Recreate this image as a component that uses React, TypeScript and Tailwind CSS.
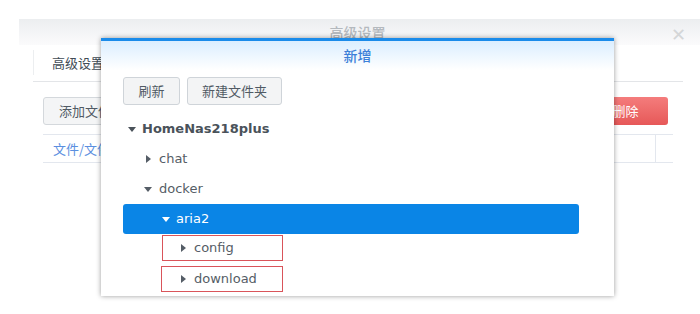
import React from 'react'

const cn = '"Noto Sans CJK SC", "DejaVu Sans", sans-serif'

const Down = ({ className = '' }: { className?: string }) => (
  <svg width="8" height="5" viewBox="0 0 8 5" className={className}>
    <polygon points="0,0 8,0 4,5" fill="currentColor" />
  </svg>
)

const Right = ({ className = '' }: { className?: string }) => (
  <svg width="5" height="8" viewBox="0 0 5 8" className={className}>
    <polygon points="0,0 5,4 0,8" fill="currentColor" />
  </svg>
)

export default function App() {
  return (
    <div
      className="relative w-[700px] h-[314px] overflow-hidden bg-white text-[13px] text-[#505a64]"
      style={{ fontFamily: cn }}
    >
      {/* background window */}
      <div className="ml-[19px] mt-[19px] h-[277px]">
        <div className="relative flex h-[26px] items-center justify-center bg-gradient-to-b from-[#eceef0] to-[#fbfbfc]">
          <span className="ml-[-4px] text-[14px] font-medium text-[#b4b9be]">高级设置</span>
          <span className="absolute right-[14px] top-[5px] text-[18px] leading-none text-[#d4d6d8]">✕</span>
        </div>
        <div className="ml-[14px] mr-[17px] flex h-[37px] items-end border-b border-[#e3e5e8]">
          <div className="mb-[6px] flex h-[25px] items-center border-l border-[#eceef0] pl-[18px] text-[13px] text-[#414b55]">
            高级设置
          </div>
        </div>
        <div className="ml-[24px] mr-[32px] mt-[15px] flex items-center justify-between">
          <div className="flex h-[28px] items-center rounded-[3px] border border-[#d4d8dc] bg-[#f4f5f6] px-[15px] text-[#505a64]">
            添加文件夹
          </div>
          <div className="flex h-[28px] w-[85px] items-center justify-center rounded-[3px] bg-gradient-to-b from-[#f47c7c] to-[#e65858] text-white">
            删除
          </div>
        </div>
        <div className="ml-[24px] mr-[27px] mt-[9px] flex h-[29px] border-y border-[#e3e7ee]">
          <div className="flex flex-1 items-center pl-[10px] text-[#5b8fe0]">文件/文件夹</div>
          <div className="w-[18px] border-l border-[#e3e7ee]" />
        </div>
      </div>

      {/* dialog */}
      <div className="absolute left-[101px] top-[38px] h-[258px] w-[513px] border-t-[3px] border-[#1a8bea] bg-white shadow-[0_0_5px_rgba(0,0,0,0.4)]">
        <div className="flex h-[29px] items-center justify-center bg-gradient-to-b from-[#dbeeff] to-white text-[14px] font-medium text-[#3b7fd8]">
          新增
        </div>
        <div className="ml-[22px] mt-[7px] flex gap-[7px]">
          <div className="flex h-[28px] w-[57px] items-center justify-center rounded-[3px] border border-[#cfd4d9] bg-[#f3f4f5]">
            刷新
          </div>
          <div className="flex h-[28px] w-[95px] items-center justify-center rounded-[3px] border border-[#cfd4d9] bg-[#f3f4f5]">
            新建文件夹
          </div>
        </div>
        <div className="ml-[22px] mt-[9px] w-[456px] text-[13px] text-[#555d66]" style={{ fontFamily: '"DejaVu Sans", sans-serif' }}>
          <div className="flex h-[30px] items-center pl-[5px] font-bold text-[#4a525a]">
            <Down className="mr-[6px]" />
            HomeNas218plus
          </div>
          <div className="flex h-[30px] items-center pl-[23px]">
            <Right className="mr-[8px]" />
            chat
          </div>
          <div className="flex h-[30px] items-center pl-[21px]">
            <Down className="mr-[7px]" />
            docker
          </div>
          <div className="flex h-[30px] items-center rounded-[3px] bg-[#0a85e6] pl-[39px] text-white">
            <Down className="mr-[6px]" />
            aria2
          </div>
          <div className="ml-[39px] mt-[1px] flex h-[26px] w-[121px] items-center border border-[#d9545a] pl-[18px]">
            <Right className="mr-[8px]" />
            config
          </div>
          <div className="ml-[38px] mt-[5px] flex h-[26px] w-[122px] items-center border border-[#d9545a] pl-[19px]">
            <Right className="mr-[8px]" />
            download
          </div>
        </div>
      </div>
    </div>
  )
}
